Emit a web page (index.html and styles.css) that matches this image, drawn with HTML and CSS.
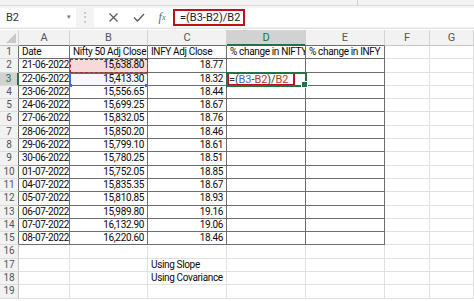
FILE: index.html
```html
<!DOCTYPE html>
<html lang="en">
<head>
  <meta charset="UTF-8" />
  <title>Beta calculation</title>
  <link rel="stylesheet" href="styles.css">
</head>
<body>
  <div class="sheet">
    <div class="ribbon-edge"><span class="ribbon-split"></span></div>
    <div class="formula-row">
      <div class="name-box"><span>B2</span><span class="caret">&#9662;</span></div>
      <div class="grip">&#8942;</div>
      <div class="formula-bar">
        <span class="fb-icon">
          <svg width="11" height="11" viewBox="0 0 11 11"><path d="M1.5 1.5 L9.5 9.5 M9.5 1.5 L1.5 9.5" stroke="#5a5a5a" stroke-width="1.2" fill="none"/></svg>
        </span>
        <span class="fb-icon">
          <svg width="12" height="11" viewBox="0 0 12 11"><path d="M1 5.5 L4.5 9 L11 2" stroke="#5a5a5a" stroke-width="1.3" fill="none"/></svg>
        </span>
        <span class="fb-icon fx">f<sub>x</sub></span>
        <span class="fb-text">=(B3-B2)/B2</span>
      </div>
    </div>
    <div class="grid" id="grid"></div>
  </div>

<script>
  const cols = ['A', 'B', 'C', 'D', 'E', 'F', 'G'];
  const data = [
    ['21-06-2022', '15,638.80', '18.77'],
    ['22-06-2022', '15,413.30', '18.32'],
    ['23-06-2022', '15,556.65', '18.44'],
    ['24-06-2022', '15,699.25', '18.67'],
    ['27-06-2022', '15,832.05', '18.76'],
    ['28-06-2022', '15,850.20', '18.46'],
    ['29-06-2022', '15,799.10', '18.61'],
    ['30-06-2022', '15,780.25', '18.51'],
    ['01-07-2022', '15,752.05', '18.85'],
    ['04-07-2022', '15,835.35', '18.67'],
    ['05-07-2022', '15,810.85', '18.93'],
    ['06-07-2022', '15,989.80', '19.16'],
    ['07-07-2022', '16,132.90', '19.06'],
    ['08-07-2022', '16,220.60', '18.46']
  ];
  const rows = [['Date', 'Nifty 50 Adj Close', 'INFY Adj Close', '% change in NIFTY', '% change in INFY']];
  data.forEach(d => rows.push(d));
  rows.push([], ['', '', 'Using Slope'], ['', '', 'Using Covariance'], []);

  const grid = document.getElementById('grid');

  const corner = document.createElement('div');
  corner.className = 'cell hdr corner';
  grid.appendChild(corner);
  cols.forEach((c, i) => {
    const h = document.createElement('div');
    h.className = 'cell hdr';
    if (i < 5) h.classList.add('tbl-top');
    if (c === 'D') h.classList.add('active');
    h.textContent = c;
    grid.appendChild(h);
  });

  rows.forEach((row, r) => {
    const n = r + 1;
    const rh = document.createElement('div');
    rh.className = 'cell rowhdr';
    if (n <= 15) rh.classList.add('tbl-left');
    if (n === 3) rh.classList.add('active');
    rh.textContent = n;
    grid.appendChild(rh);

    cols.forEach((c, i) => {
      const cell = document.createElement('div');
      cell.className = 'cell';
      if (n <= 15 && i < 5) cell.classList.add('tbl');
      if (n > 15) cell.classList.add('spill');
      const val = row[i] || '';
      if (n > 1 && n <= 15 && (i === 1 || i === 2)) cell.classList.add('num');
      if (c === 'B' && n === 2) cell.classList.add('ref-red');
      if (c === 'B' && n === 3) cell.classList.add('ref-blue');
      if (c === 'D' && n === 3) {
        cell.classList.add('selected');
        cell.innerHTML = '<span class="editing">=(<b class="b">B3</b>-<b class="r">B2</b>)/<b class="r">B2</b></span>';
      } else {
        cell.textContent = val;
      }
      grid.appendChild(cell);
    });
  });
</script>
</body>
</html>
```

FILE: styles.css
```css
* {
  box-sizing: border-box;
}
body {
  margin: 0;
  background: #fff;
  font-family: Roboto, "Open Sans", sans-serif;
  color: #111;
  overflow: hidden;
}
.sheet {
  width: 474px;
  height: 301px;
  overflow: hidden;
  background: #fff;
}
.ribbon-edge {
  height: 6px;
  background: #f3f3f3;
  border-bottom: 1px solid #dcdcdc;
  position: relative;
}
.ribbon-split {
  position: absolute;
  left: 357px;
  top: 0;
  width: 1px;
  height: 5px;
  background: #cfcfcf;
}
.formula-row {
  display: flex;
  align-items: center;
  height: 23px;
  background: #f3f3f3;
  padding: 2px 0 2px 0;
  border-bottom: 1px solid #e2e2e2;
}
.name-box {
  width: 76px;
  height: 19px;
  background: #fff;
  display: flex;
  align-items: center;
  justify-content: space-between;
  padding: 0 5px 0 6px;
  font-size: 11px;
  color: #333;
}
.caret {
  font-size: 7px;
  color: #777;
}
.grip {
  width: 18px;
  text-align: center;
  color: #b5b5b5;
  font-size: 12px;
}
.formula-bar {
  flex: 1;
  height: 19px;
  background: #fff;
  display: flex;
  align-items: center;
  padding-left: 7px;
}
.fb-icon {
  width: 25px;
  display: flex;
  justify-content: center;
  align-items: center;
}
.fb-icon.fx {
  font-family: "Liberation Serif", serif;
  font-style: italic;
  font-size: 12px;
  color: #666;
  width: 22px;
}
.fb-icon.fx sub {
  font-size: 8px;
  vertical-align: -1px;
}
.fb-text {
  border: 2px solid #c0101e;
  height: 17px;
  line-height: 13px;
  padding: 0 3px 0 5px;
  font-size: 11px;
  color: #222;
}
.grid {
  display: grid;
  grid-template-columns: 19px 51px 78px 79px 79px 79px 45px 44px;
  grid-template-rows: 16px;
  grid-auto-rows: 13.3px;
  margin-top: 1px;
  font-size: 10px;
  letter-spacing: -0.35px;
}
.cell {
  border-right: 1px solid #e1e1e1;
  border-bottom: 1px solid #e1e1e1;
  line-height: 12.5px;
  padding: 0 3px 0 3px;
  white-space: nowrap;
  overflow: hidden;
  position: relative;
  color: #0a0a0a;
}
.cell.spill {
  overflow: visible;
}
.hdr {
  background: #f2f2f2;
  color: #555;
  text-align: center;
  line-height: 16px;
  border-right-color: #d4d4d4;
  border-bottom-color: #c6c6c6;
  font-size: 11px;
  letter-spacing: 0;
}
.hdr.tbl-top {
  border-bottom-color: #6e6e6e;
}
.corner::after {
  content: "";
  position: absolute;
  right: 2px;
  bottom: 2px;
  border-left: 10px solid transparent;
  border-bottom: 10px solid #c9c9c9;
}
.rowhdr {
  background: #f2f2f2;
  color: #555;
  text-align: center;
  padding: 0;
  letter-spacing: 0;
  border-right-color: #c6c6c6;
  border-bottom-color: #dcdcdc;
}
.rowhdr.tbl-left {
  border-right-color: #6e6e6e;
}
.cell.active {
  background: #d2d2d2;
  color: #217346;
}
.hdr.active {
  border-bottom: 2px solid #217346;
}
.rowhdr.active {
  border-right: 2px solid #217346;
}
.tbl {
  border-right-color: #6e6e6e;
  border-bottom-color: #6e6e6e;
}
.num {
  text-align: right;
}
.ref-red {
  background: #f8d9d9;
  outline: 1.5px dashed #9c2f2f;
  outline-offset: -1.5px;
}
.ref-blue {
  background: #f4f7fc;
  outline: 1px solid #3f6fcf;
  outline-offset: -1px;
  overflow: visible;
}
.ref-blue::before,
.ref-blue::after {
  content: "";
  position: absolute;
  bottom: -2px;
  width: 3px;
  height: 3px;
  background: #3f6fcf;
}
.ref-blue::before {
  left: -1px;
}
.ref-blue::after {
  right: -1px;
}
.selected {
  outline: 2px solid #217346;
  outline-offset: -1px;
  overflow: visible;
  z-index: 2;
  padding: 0;
}
.selected::after {
  content: "";
  position: absolute;
  right: -3px;
  bottom: -3px;
  width: 5px;
  height: 5px;
  background: #217346;
  border: 1px solid #fff;
}
.editing {
  display: inline-block;
  height: 14px;
  margin-top: -1px;
  border: 2px solid #c0101e;
  padding: 0 5px 0 0;
  line-height: 11px;
  font-size: 11px;
  letter-spacing: -0.1px;
  color: #333;
}
.editing b {
  font-weight: normal;
}
.editing .b {
  color: #3f6fcf;
}
.editing .r {
  color: #c0392b;
}
```
